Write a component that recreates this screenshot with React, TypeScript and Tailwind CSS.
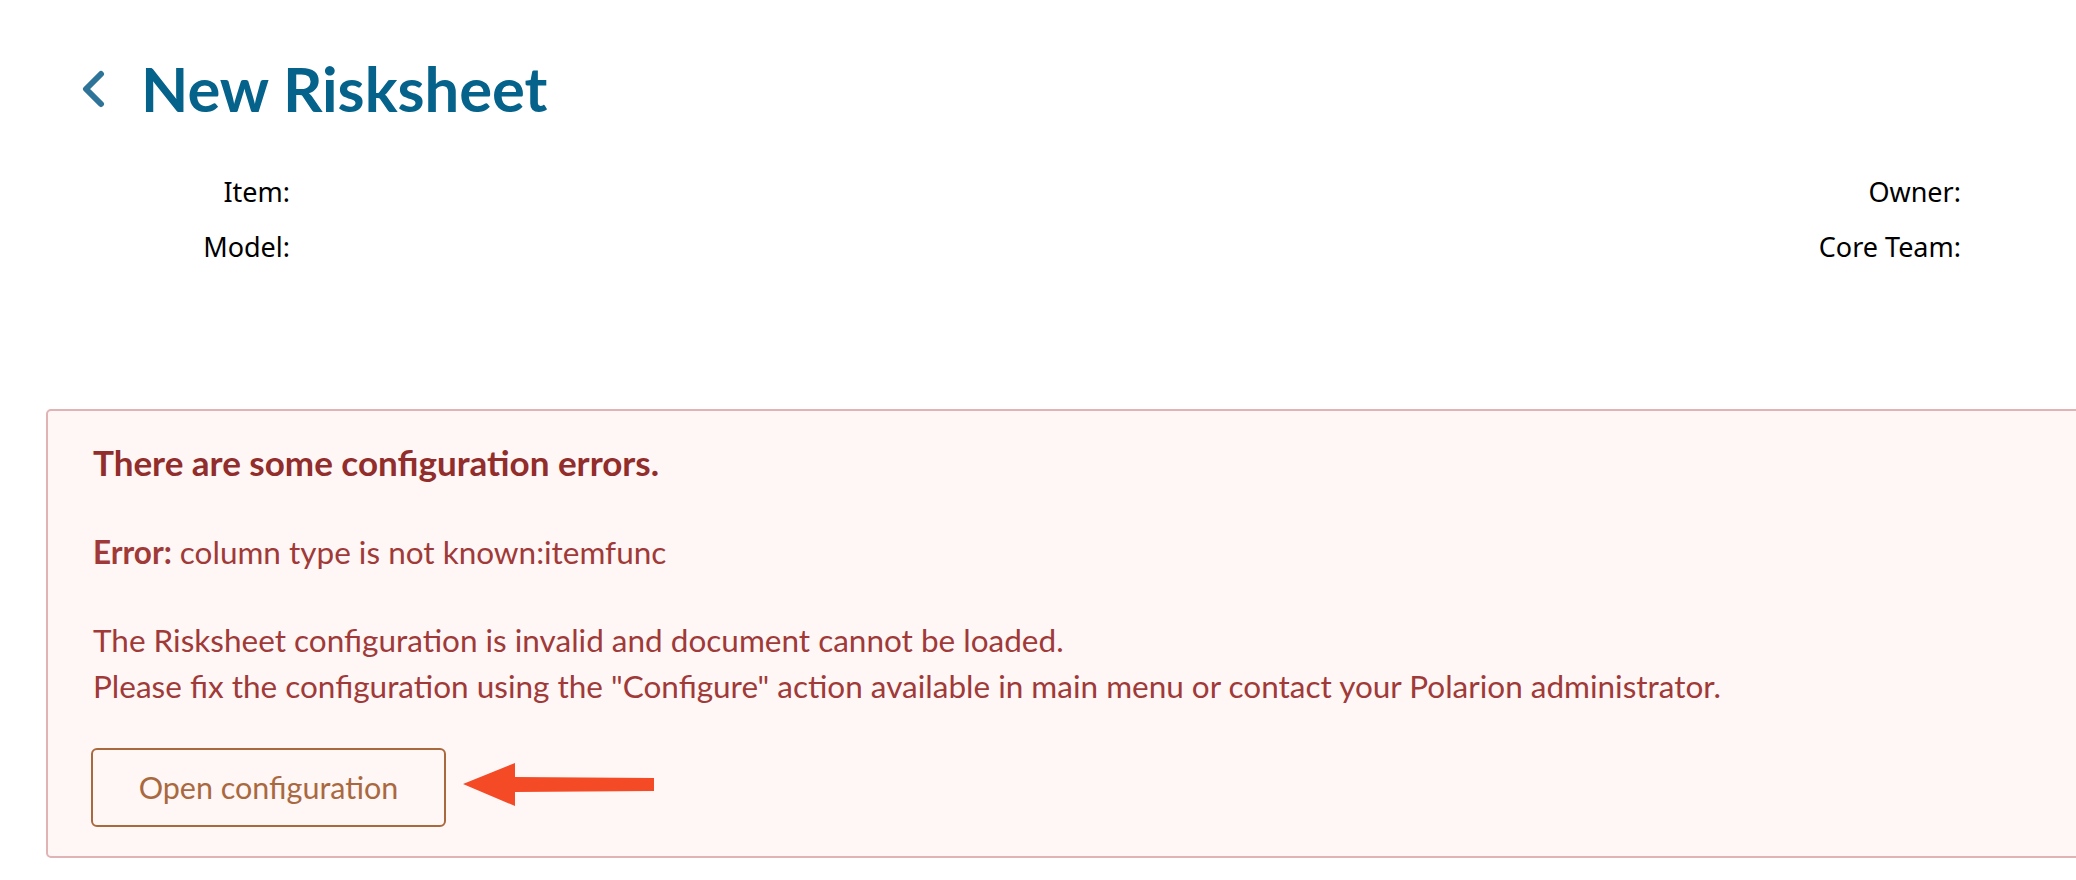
import React from 'react';

function InfoLabel({ children }: { children: React.ReactNode }) {
  return <div className="h-[55px] leading-[55px]">{children}</div>;
}

export default function App() {
  return (
    <div className="relative w-[2076px] h-[880px] overflow-hidden bg-white">
      {/* header */}
      <div className="flex items-center pl-[79px] pt-[52px] h-[126px]">
        <svg width="29" height="38" viewBox="0 0 29 38" className="shrink-0">
          <path d="M22 4 L7 19 L22 34" fill="none" stroke="#2e7499" strokeWidth="6" strokeLinecap="round" strokeLinejoin="round" />
        </svg>
        <h1
          className="ml-[33px] text-[61.5px] leading-none font-bold text-[#05628a]"
          style={{ fontFamily: 'Lato, "Noto Sans", sans-serif' }}
        >
          New Risksheet
        </h1>
      </div>

      {/* document info */}
      <div
        className="flex justify-between mt-[38px] text-[27px] text-black"
        style={{ fontFamily: '"Noto Sans", "Open Sans", sans-serif' }}
      >
        <div className="w-[290px] text-right">
          <InfoLabel>Item:</InfoLabel>
          <InfoLabel>Model:</InfoLabel>
        </div>
        <div className="pr-[115px] text-right">
          <InfoLabel>Owner:</InfoLabel>
          <InfoLabel>Core Team:</InfoLabel>
        </div>
      </div>

      {/* error message */}
      <div
        className="ml-[46px] mr-[-10px] mt-[135px] h-[449px] rounded-[5px] border-2 border-[#e0b4b4] bg-[#fff6f6] pl-[45px] pt-[31px] text-[#9f3a38]"
        style={{ fontFamily: 'Lato, "Noto Sans", sans-serif' }}
      >
        <div className="text-[35px] leading-[40px] font-bold text-[#912d2b]">
          There are some configuration errors.
        </div>
        <p className="mt-[47px] text-[31.5px] leading-[46px]">
          <b className="font-bold">Error:</b> column type is not known:itemfunc
        </p>
        <p className="mt-[42px] text-[31.5px] leading-[46px]">
          The Risksheet configuration is invalid and document cannot be loaded.
          <br />
          Please fix the configuration using the "Configure" action available in main menu or contact your Polarion administrator.
        </p>
        <button className="mt-[39px] w-[355px] h-[79px] rounded-[6px] border-2 border-[#a9693f] text-[30.5px] text-[#a9693f] bg-transparent ml-[-2px]">
          Open configuration
        </button>
      </div>

      {/* annotation arrow */}
      <svg className="absolute left-[460px] top-[760px]" width="200" height="50" viewBox="0 0 200 50">
        <path d="M3 24 L55 3 L55 17 L194 18 L194 31 L55 32 L55 46 Z" fill="#f44a25" />
      </svg>
    </div>
  );
}
